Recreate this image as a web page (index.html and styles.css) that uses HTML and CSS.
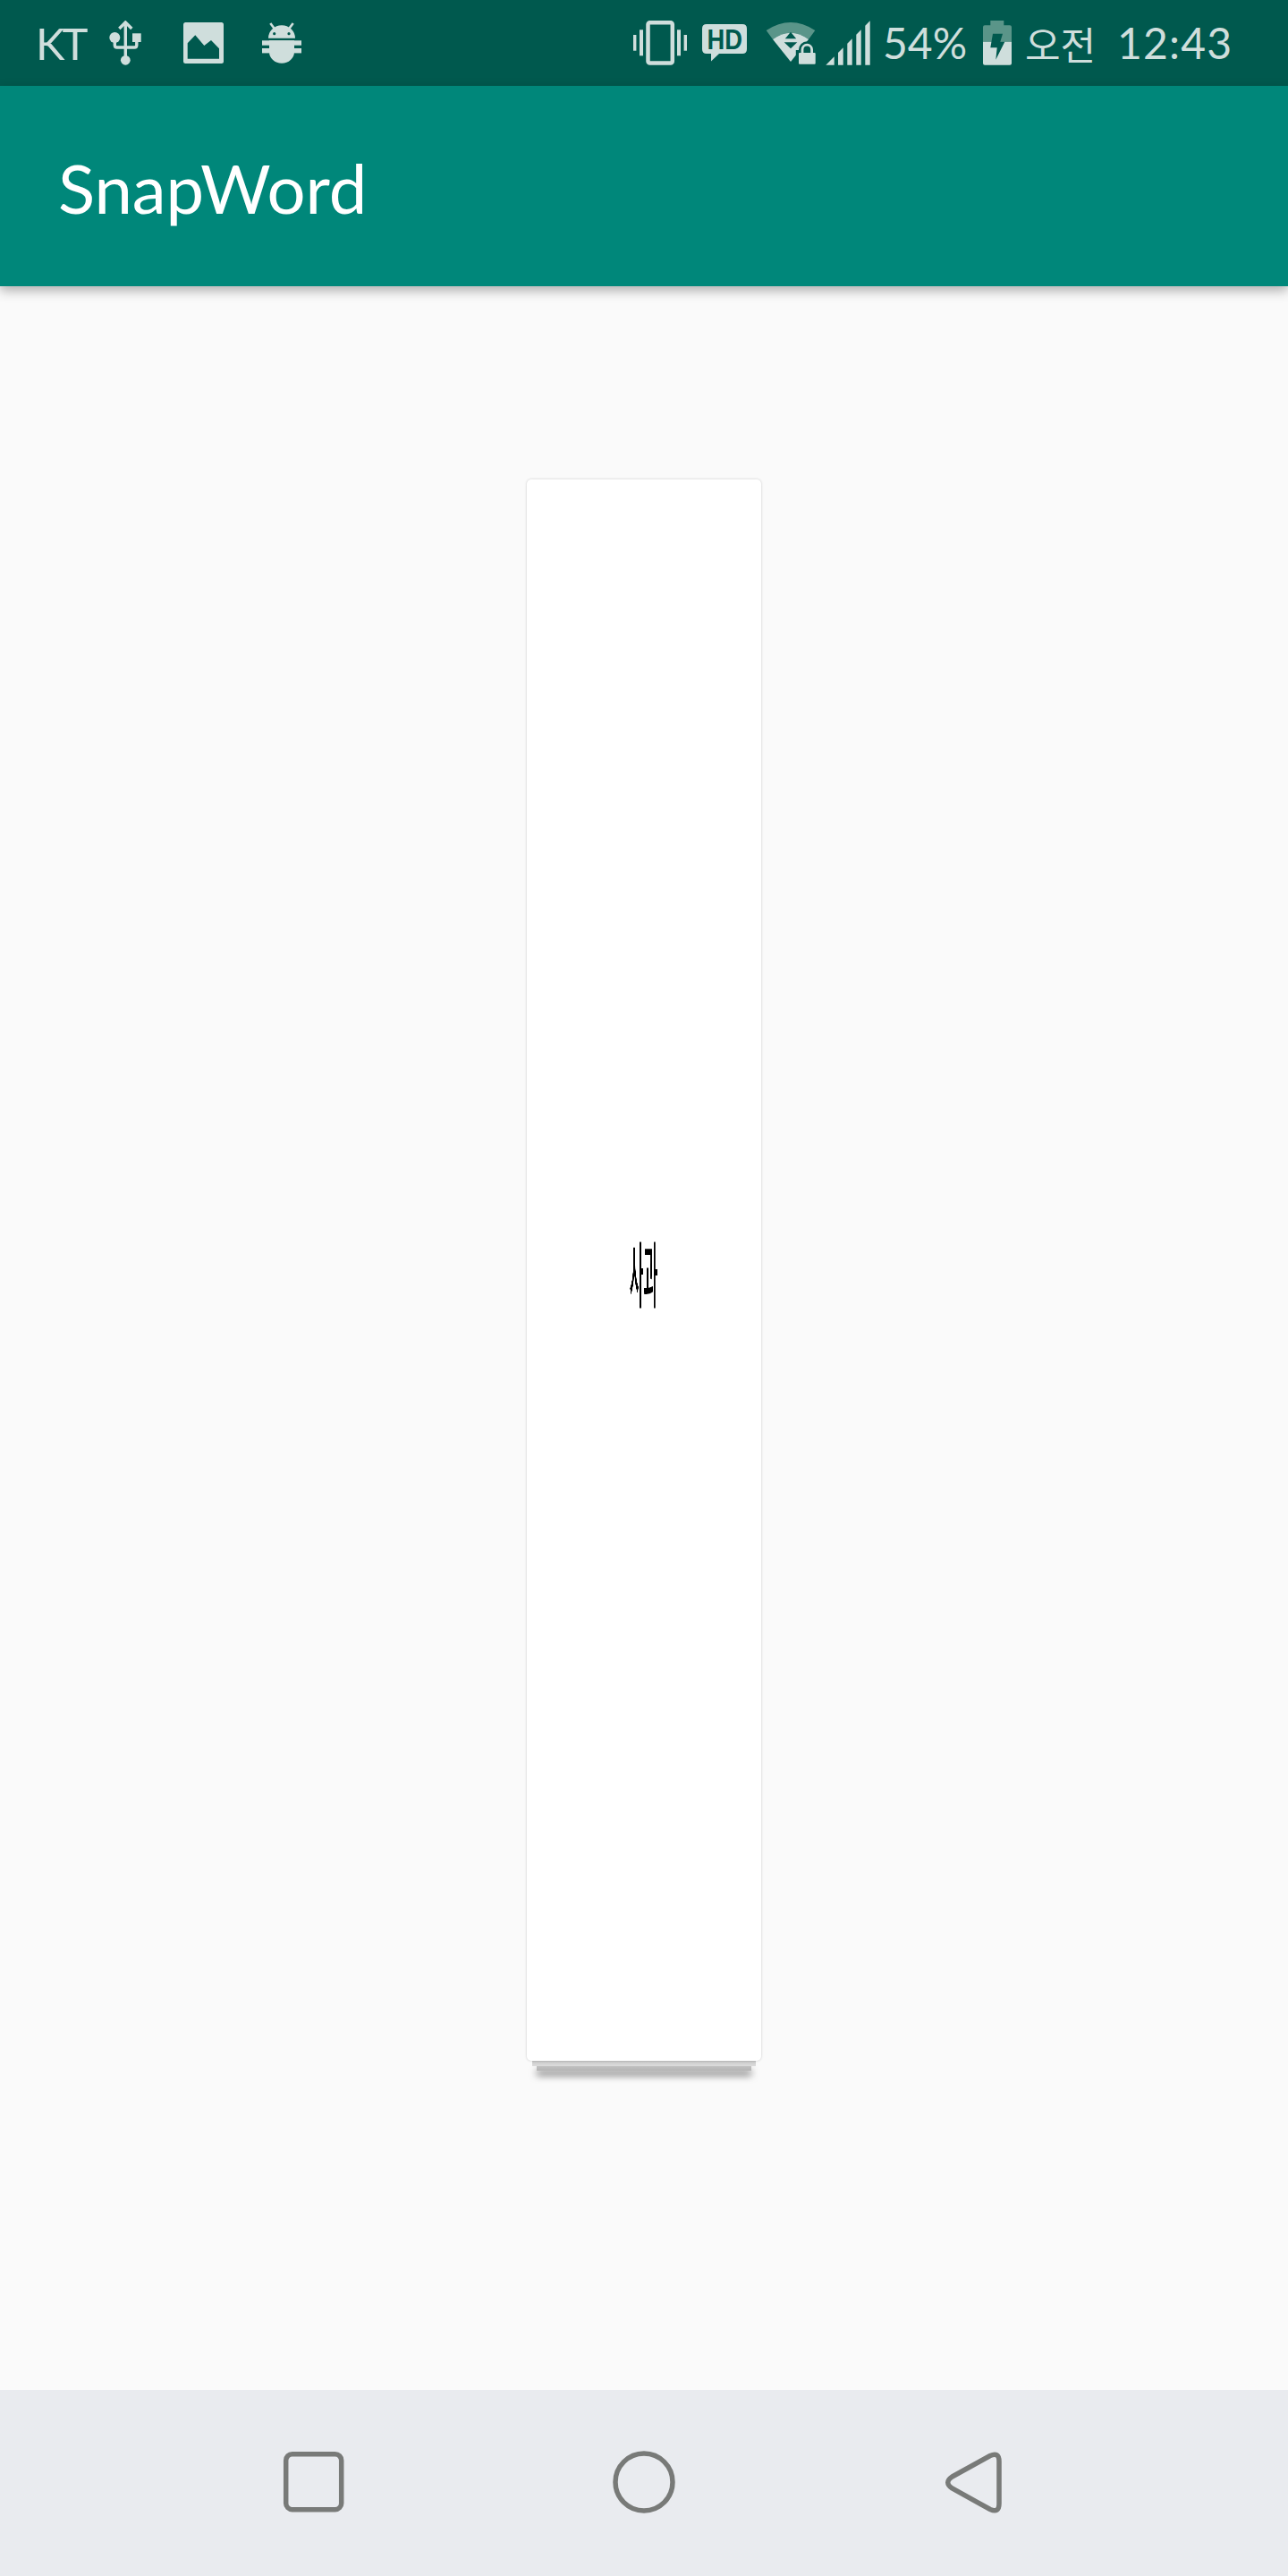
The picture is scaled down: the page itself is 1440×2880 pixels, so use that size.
FILE: index.html
```html
<!DOCTYPE html>
<html lang="ko">
<head>
<meta charset="utf-8">
<title>SnapWord</title>
<link rel="stylesheet" href="styles.css">
</head>
<body>
<div class="screen">
  <header class="status">
    <div class="status-left">
      <span class="carrier">KT</span>
      <svg class="i-usb" width="36" height="50" viewBox="0 0 36 50"><g class="ln"><path d="M18.3 3V42"/><path d="M11.3 9L18.3 2L25.3 9"/><path d="M6.3 22V27.5Q6.3 30 8.8 30H28.3Q30.8 30 30.8 27.5V22"/></g><g class="fl"><circle cx="6.3" cy="19" r="6"/><rect x="26" y="14.3" width="9.7" height="9.7"/><circle cx="18.3" cy="44.3" r="5.4"/></g></svg>
      <svg class="i-img" width="45" height="46" viewBox="0 0 45 46"><rect class="fl" width="45" height="46" rx="2.5"/><path class="dk" d="M4.7 23.3L13.3 14.3L23.3 26L31 20L40 29.3V40.7H4.7Z"/></svg>
      <svg class="i-bug" width="44" height="46" viewBox="0 0 44 46"><g class="ln thin"><path d="M9.3 1L14 7.3"/><path d="M34.7 1L30 7.3"/></g><path class="fl" d="M7 17.7A15 14.5 0 0 1 37 17.7Z"/><circle class="dk" cx="13.7" cy="12.7" r="1.6"/><circle class="dk" cx="30" cy="12.7" r="1.6"/><rect class="fl" y="20.3" width="44" height="5.4"/><rect class="fl" y="29" width="44" height="5.4"/><path class="fl" d="M8 20.3H36V33A14 12.7 0 0 1 8 33Z"/></svg>
    </div>
    <div class="status-right">
      <svg class="i-vib" width="60" height="50" viewBox="0 0 60 50"><g class="fl"><rect y="16" width="3.4" height="17.7"/><rect x="7" y="10.3" width="4" height="29"/><rect x="49" y="10.3" width="4" height="29"/><rect x="56.6" y="16" width="3.4" height="17.7"/></g><rect class="ln wide" x="16.5" y="2.2" width="27.3" height="45.3" rx="2"/></svg>
      <svg class="i-hd" width="50" height="42" viewBox="0 0 50 42"><path class="fl" d="M5 0H45Q50 0 50 5V28Q50 33 45 33H19L10 41.5V33H5Q0 33 0 28V5Q0 0 5 0Z"/><text class="hd-text" x="5.5" y="27.7" textLength="39.5" lengthAdjust="spacingAndGlyphs">HD</text></svg>
      <svg class="i-wifi" width="56" height="48" viewBox="0 0 56 48"><path class="dim" d="M.7 10Q28 -8 55.3 10L48 20Q28 5.4 8 20Z"/><path class="fl" d="M8 20Q28 5.4 48 20L28 45Z"/><path class="dk" d="M28 11.7L34.2 19.3H21.8Z"/><path class="dk" d="M20.7 23.3H35.3L28 30.3Z"/><rect class="dk" x="33.8" y="32" width="25" height="18"/><path class="halo" d="M41 35V31.5A5.3 5.3 0 0 1 51.6 31.5V35"/><path class="ln lock" d="M41 35V31.5A5.3 5.3 0 0 1 51.6 31.5V35"/><rect class="fl" x="37" y="35" width="18.7" height="12.7" rx="1"/></svg>
      <svg class="i-sig" width="50" height="50" viewBox="0 0 50 50"><path class="fl" d="M.3 49.7L9.7 40.3V49.7ZM14 36L19.7 30.3V49.7H14ZM24.3 25.7L29.7 20.3V49.7H24.3ZM34.3 15.7L39.7 10.3V49.7H34.3ZM44.3 5.7L49.7 .3V49.7H44.3Z"/></svg>
      <span class="pct">54%</span>
      <svg class="i-bat" width="32" height="50" viewBox="0 0 32 50"><path class="dim" d="M8.3 0H23.3V5.3H30Q32 5.3 32 7.3V23.7H0V7.3Q0 5.3 2 5.3H8.3Z"/><path class="fl" d="M0 23.7H32V47.7Q32 49.7 30 49.7H2Q0 49.7 0 47.7Z"/><path class="dk" d="M11 14.7H22L19.3 23.7H24.3L14.3 43.7L15.7 30.3H8.3Z"/></svg>
      <span class="ampm">오전</span>
      <span class="clock">12:43</span>
    </div>
  </header>
  <div class="appbar"><h1 class="title">SnapWord</h1></div>
  <main class="content">
    <div class="stack">
      <div class="card"><span class="word">사과</span></div>
      <div class="layer layer-2"></div>
      <div class="layer layer-3"></div>
    </div>
  </main>
  <nav class="navbar">
    <svg class="n-square" width="70" height="70" viewBox="0 0 70 70"><rect class="nv" x="3.7" y="3.7" width="62" height="62" rx="7"/></svg>
    <svg class="n-circle" width="70" height="70" viewBox="0 0 70 70"><circle class="nv" cx="35" cy="35" r="32"/></svg>
    <svg class="n-back" width="66" height="72" viewBox="0 0 66 72"><path class="nv" d="M8.5 29L51 5.5Q61 1 61 12V59Q61 70 51 65.5L8.5 42Q-1 35.5 8.5 29Z"/></svg>
  </nav>
</div>
</body>
</html>
```

FILE: styles.css
```css
html, body { margin: 0; padding: 0; }
body { background: #fafafa; }
.screen { width: 1440px; height: 2880px; display: flex; flex-direction: column; overflow: hidden; background: #fafafa; }

.status { height: 96px; flex: none; display: flex; justify-content: space-between; align-items: center; background: #00594e; color: #cfdedc; font-family: Lato, "Noto Sans", sans-serif; }
.status-left { display: flex; align-items: center; padding-left: 40px; }
.status-right { display: flex; align-items: center; padding-right: 63px; }
.carrier { flex: none; width: 55px; font-size: 49px; line-height: 96px; letter-spacing: -3px; white-space: nowrap; }
.i-usb { margin-left: 27px; }
.i-img { margin-left: 47px; }
.i-bug { margin-left: 43px; }
.i-hd { margin-left: 17px; }
.i-wifi { margin-left: 21px; }
.i-sig { margin-left: 11px; }
.pct { flex: none; width: 92px; margin-left: 14px; margin-right: 2px; font-size: 48px; line-height: 96px; white-space: nowrap; }
.i-bat { margin-left: 18px; }
.ampm { flex: none; width: 78px; margin-left: 15px; font-family: "Noto Sans CJK KR", sans-serif; font-size: 43px; line-height: 96px; white-space: nowrap; }
.clock { flex: none; width: 128px; margin-left: 25px; font-size: 48px; line-height: 96px; letter-spacing: 1.2px; white-space: nowrap; }

.fl { fill: #cfdedc; }
.dk { fill: #00594e; }
.dim { fill: #5a9589; }
.ln { fill: none; stroke: #cfdedc; stroke-width: 3.4; }
.ln.thin { stroke-width: 2.6; }
.ln.wide { stroke-width: 4.5; }
.ln.lock { stroke-width: 2.8; }
.halo { fill: none; stroke: #00594e; stroke-width: 8; }
.hd-text { font-family: "Liberation Sans", sans-serif; font-weight: 700; font-size: 31px; fill: #00594e; }

.appbar { height: 224px; flex: none; display: flex; align-items: center; padding-left: 65px; padding-top: 3px; box-sizing: border-box; background: #00877a; box-shadow: 0 5px 12px rgba(0, 0, 0, .3); position: relative; z-index: 1; }
.title { margin: 0; font-family: Lato, sans-serif; font-weight: 400; font-size: 76px; line-height: 1; color: #fff; }

.content { flex: 1; display: flex; justify-content: center; align-items: flex-start; padding-top: 216px; }
.stack { width: 262px; display: flex; flex-direction: column; align-items: center; }
.card { width: 262px; height: 1768px; display: flex; align-items: center; justify-content: center; background: #fff; border-radius: 5px; box-shadow: 0 0 3px rgba(0, 0, 0, .2); position: relative; z-index: 2; }
.word { display: inline-block; font-family: "Noto Sans CJK KR", sans-serif; font-weight: 500; font-size: 80px; line-height: 1; color: #000; transform: scaleX(.215); will-change: transform; }
.layer { flex: none; }
.layer-2 { width: 250px; height: 6px; background: linear-gradient(#c8c8c8, #dcdcdc); position: relative; z-index: 1; }
.layer-3 { width: 240px; height: 5px; background: linear-gradient(#c0c0c0, #b4b4b4); box-shadow: 0 5px 8px rgba(0, 0, 0, .6); }

.navbar { height: 208px; flex: none; display: flex; align-items: flex-start; padding-top: 68px; box-sizing: border-box; background: #e9ebef; }
.nv { fill: none; stroke: #787a78; stroke-width: 5.5; }
.n-square { margin-left: 316px; }
.n-circle { margin-left: 299px; }
.n-back { margin-left: 301px; }
```
